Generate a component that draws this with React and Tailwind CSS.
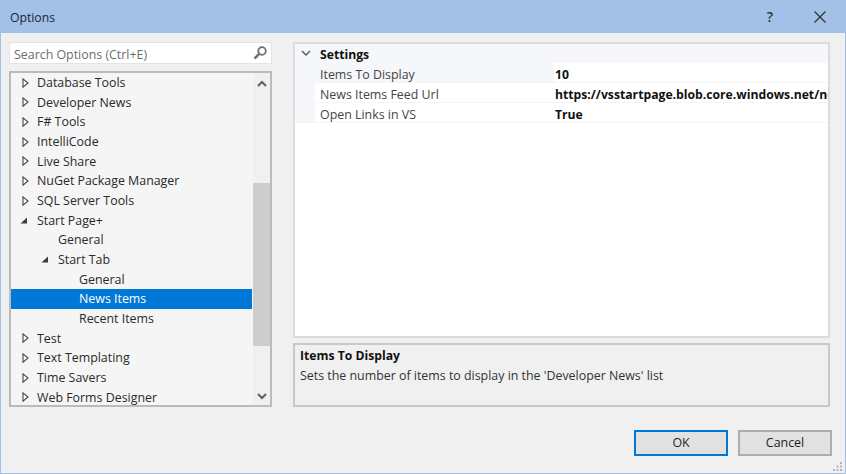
const treeRows = [
  { label: 'Database Tools', indent: 0, arrow: 'closed' },
  { label: 'Developer News', indent: 0, arrow: 'closed' },
  { label: 'F# Tools', indent: 0, arrow: 'closed' },
  { label: 'IntelliCode', indent: 0, arrow: 'closed' },
  { label: 'Live Share', indent: 0, arrow: 'closed' },
  { label: 'NuGet Package Manager', indent: 0, arrow: 'closed' },
  { label: 'SQL Server Tools', indent: 0, arrow: 'closed' },
  { label: 'Start Page+', indent: 0, arrow: 'open' },
  { label: 'General', indent: 1 },
  { label: 'Start Tab', indent: 1, arrow: 'open' },
  { label: 'General', indent: 2 },
  { label: 'News Items', indent: 2, selected: true },
  { label: 'Recent Items', indent: 2 },
  { label: 'Test', indent: 0, arrow: 'closed' },
  { label: 'Text Templating', indent: 0, arrow: 'closed' },
  { label: 'Time Savers', indent: 0, arrow: 'closed' },
  { label: 'Web Forms Designer', indent: 0, arrow: 'closed' },
];

const indentClass = ['pl-[8px]', 'pl-[29px]', 'pl-[50px]'];

const settings = [
  { name: 'Items To Display', value: '10', active: true },
  { name: 'News Items Feed Url', value: 'https://vsstartpage.blob.core.windows.net/news/vs' },
  { name: 'Open Links in VS', value: 'True' },
];

const TreeArrow = ({ type }) => {
  if (type === 'open') {
    return (
      <svg width="7" height="7" viewBox="0 0 7 7" className="-ml-[2px] block">
        <path d="M7 .5 V6.500 H.5 Z" fill="#3c3c3c" />
      </svg>
    );
  }
  return (
    <svg width="7" height="10" viewBox="0 0 7 10" className="block">
      <path d="M1 .8 L6 5 L1 9.2 Z" fill="#fff" stroke="#444" strokeWidth="1.1" />
    </svg>
  );
};

const TreeRow = ({ row }) => (
  <div className={`flex h-[19.67px] shrink-0 items-center ${indentClass[row.indent]} ${row.selected ? 'bg-[#0078d7] text-white' : 'text-[#2a2a2a]'}`}>
    <span className="flex w-[18px] shrink-0 items-center pl-[3px]">
      {row.arrow && <TreeArrow type={row.arrow} />}
    </span>
    <span className="whitespace-nowrap pt-px">{row.label}</span>
  </div>
);

const SettingRow = ({ setting }) => (
  <div className="flex h-[20px] border-b border-[#f5f5f5]">
    <div className="w-[20px] shrink-0 bg-[#f5f7fb]" />
    <div className={`flex w-[239px] shrink-0 items-center pl-[5px] pt-[6px] text-[#444] ${setting.active ? 'bg-[#f5f7fb]' : 'bg-white'}`}>
      {setting.name}
    </div>
    <div className="flex min-w-0 flex-1 items-center overflow-hidden whitespace-nowrap pl-[1px] pt-[6px] text-[12.2px] font-bold text-[#111]">
      {setting.value}
    </div>
  </div>
);

const DialogButton = ({ label, primary }) => (
  <button className={`h-[26px] w-[94px] bg-[#e1e1e1] text-[#1e1e1e] ${primary ? 'border-2 border-[#0078d7]' : 'border-2 border-[#adadad]'}`}>
    {label}
  </button>
);

export default function App() {
  return (
    <div className="relative flex h-[474px] w-[846px] flex-col overflow-hidden border-x border-b border-[#a3c0e6] bg-[#f0f0f0] font-['Open_Sans','Noto_Sans',sans-serif] text-[12.4px]">
      {/* Title bar */}
      <div className="flex h-[33px] shrink-0 items-center justify-between bg-[#a3c0e6] pl-[9px] pr-[19px] text-[12.2px] text-[#1c2530]">
        <span className="pt-[3px]">Options</span>
        <div className="flex items-center gap-[41px]">
          <span className="text-[14px] font-semibold text-[#333]">?</span>
          <svg width="12" height="12" viewBox="0 0 12 12" className="block">
            <path d="M.5 .5 L11.5 11.5 M11.5 .5 L.5 11.5" stroke="#2b2f36" strokeWidth="1.2" />
          </svg>
        </div>
      </div>

      <div className="flex min-h-0 flex-1 gap-[21px] pl-[8px] pr-[15px] pt-[9px]">
        {/* Left column */}
        <div className="flex w-[263px] shrink-0 flex-col gap-[7px]">
          <div className="flex h-[22px] items-center justify-between border border-[#e3e3e3] bg-white pl-[4px] pr-[3px] text-[#6d6d6d]">
            <span className="pt-[4px]">Search Options (Ctrl+E)</span>
            <svg width="16" height="16" viewBox="0 0 16 16" className="block">
              <circle cx="10" cy="6" r="3.8" fill="none" stroke="#707070" strokeWidth="1.8" />
              <path d="M7.2 8.8 L2.5 13.5" stroke="#707070" strokeWidth="2.6" />
            </svg>
          </div>
          <div className="flex h-[336px] border-2 border-[#b8bbc0] bg-[#f5f5f5]">
            <div className="flex w-[241px] shrink-0 flex-col overflow-hidden">
              {treeRows.map((row, i) => (
                <TreeRow key={i} row={row} />
              ))}
            </div>
            <div className="ml-px flex w-[17px] flex-col items-center bg-[#f0f0f0]">
              <div className="flex h-[20px] items-center">
                <svg width="10" height="7" viewBox="0 0 10 7" className="block">
                  <path d="M1 6 L5 2 L9 6" fill="none" stroke="#606060" strokeWidth="2" />
                </svg>
              </div>
              <div className="mt-[90px] h-[163px] w-full bg-[#cdcdcd]" />
              <div className="mt-[41px] flex h-[18px] items-center">
                <svg width="10" height="7" viewBox="0 0 10 7" className="block">
                  <path d="M1 1 L5 5 L9 1" fill="none" stroke="#606060" strokeWidth="2" />
                </svg>
              </div>
            </div>
          </div>
        </div>

        {/* Right column */}
        <div className="flex min-w-0 flex-1 flex-col gap-[5px]">
          <div className="h-[296px] overflow-hidden border-2 border-[#dcdcdc] bg-white">
            <div className="flex h-[19px] items-center bg-[#f5f7fb] text-[12.2px] font-bold text-[#111]">
              <span className="flex w-[25px] shrink-0 justify-center pr-[4px]">
                <svg width="10" height="7" viewBox="0 0 10 7" className="block">
                  <path d="M1 1 L5 5 L9 1" fill="none" stroke="#555" strokeWidth="1.4" />
                </svg>
              </span>
              <span className="pt-[3px]">Settings</span>
            </div>
            {settings.map((setting) => (
              <SettingRow key={setting.name} setting={setting} />
            ))}
          </div>
          <div className="flex h-[64px] flex-col border-2 border-[#c8c8c8] bg-[#f0f0f0] pl-[5px] pt-px leading-[20px]">
            <span className="text-[12.2px] font-bold text-[#111]">Items To Display</span>
            <span className="text-[#333]">Sets the number of items to display in the 'Developer News' list</span>
          </div>
          <div className="-mr-[2px] mt-[18px] flex justify-end gap-[10px]">
            <DialogButton label="OK" primary />
            <DialogButton label="Cancel" />
          </div>
        </div>
      </div>

      {/* Resize grip */}
      <svg width="9" height="9" viewBox="0 0 9 9" className="absolute bottom-[2px] right-[3px] block">
        <path d="M7 0h2v2H7z M3.500 3.500h2v2h-2z M7 3.500h2v2H7z M0 7h2v2H0z M3.500 7h2v2h-2z M7 7h2v2H7z" fill="#b4b4b4" />
      </svg>
    </div>
  );
}
